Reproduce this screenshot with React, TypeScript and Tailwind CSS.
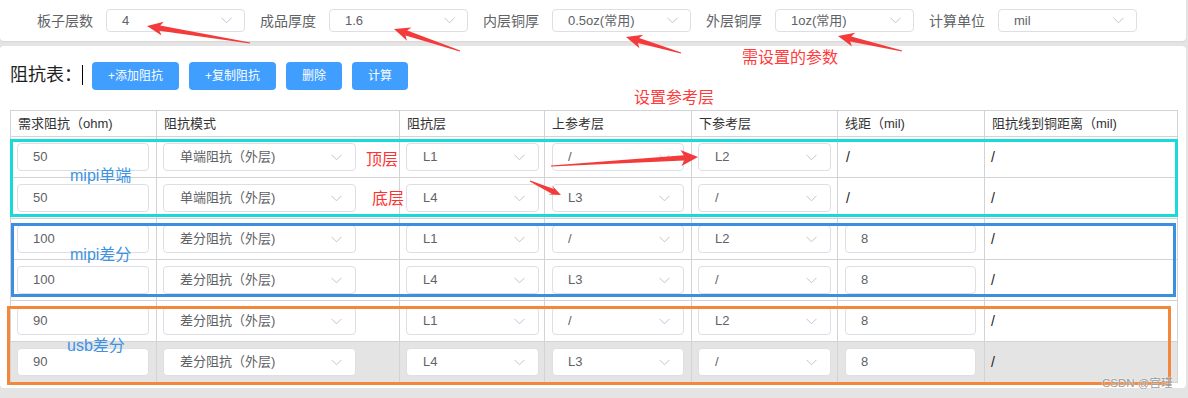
import React from 'react';

type Row = {
  imp: string;
  mode: string;
  layer: string;
  up: string;
  down: string;
  gap: string | null;
  gray?: boolean;
};

const params = [
  { label: '板子层数', value: '4' },
  { label: '成品厚度', value: '1.6' },
  { label: '内层铜厚', value: '0.5oz(常用)' },
  { label: '外层铜厚', value: '1oz(常用)' },
  { label: '计算单位', value: 'mil' },
];

const rows: Row[] = [
  { imp: '50', mode: '单端阻抗（外层)', layer: 'L1', up: '/', down: 'L2', gap: null },
  { imp: '50', mode: '单端阻抗（外层)', layer: 'L4', up: 'L3', down: '/', gap: null },
  { imp: '100', mode: '差分阻抗（外层)', layer: 'L1', up: '/', down: 'L2', gap: '8' },
  { imp: '100', mode: '差分阻抗（外层)', layer: 'L4', up: 'L3', down: '/', gap: '8' },
  { imp: '90', mode: '差分阻抗（外层)', layer: 'L1', up: '/', down: 'L2', gap: '8' },
  { imp: '90', mode: '差分阻抗（外层)', layer: 'L4', up: 'L3', down: '/', gap: '8', gray: true },
];

const headers = ['需求阻抗（ohm)', '阻抗模式', '阻抗层', '上参考层', '下参考层', '线距（mil)', '阻抗线到铜距离（mil)'];

const Chevron = () => (
  <svg width="11" height="7" viewBox="0 0 11 7" fill="none" className="shrink-0">
    <polyline points="0.5,0.8 5.5,5.8 10.5,0.8" stroke="#c0c4cc" strokeWidth="1" />
  </svg>
);

const Field = ({ text, className, select }: { text: string; className: string; select?: boolean }) => (
  <div className={`h-[28px] border border-[#dcdfe6] rounded-[4px] bg-white flex items-center justify-between pl-[15px] pr-[13px] text-[13px] text-[#606266] ${className}`}>
    <span>{text}</span>
    {select && <Chevron />}
  </div>
);

// red screenshot-tool arrow: thin tail, thicker neck, barbed head
function arrowPoints(x1: number, y1: number, x2: number, y2: number, head = 16, hw = 7) {
  const dx = x2 - x1;
  const dy = y2 - y1;
  const L = Math.hypot(dx, dy);
  const ux = dx / L;
  const uy = dy / L;
  const nx = -uy;
  const ny = ux;
  const bx = x2 - ux * head;
  const by = y2 - uy * head;
  const kx = bx + ux * 3;
  const ky = by + uy * 3;
  const p = (x: number, y: number) => `${x.toFixed(1)},${y.toFixed(1)}`;
  return [
    p(x1 + nx * 0.6, y1 + ny * 0.6),
    p(kx + nx * 2.6, ky + ny * 2.6),
    p(bx + nx * hw, by + ny * hw),
    p(x2, y2),
    p(bx - nx * hw, by - ny * hw),
    p(kx - nx * 2.6, ky - ny * 2.6),
    p(x1 - nx * 0.6, y1 - ny * 0.6),
  ].join(' ');
}

const arrows: [number, number, number, number, number?, number?][] = [
  [250, 43, 147, 26],
  [460, 51, 394, 29],
  [681, 53, 626, 37],
  [902, 51, 838, 36],
  [551, 166, 698, 157, 17, 8],
  [530, 181, 561, 195, 12, 5],
];

export default function App() {
  return (
    <div className="relative w-[1188px] h-[398px] overflow-hidden bg-[#e4e4e4] font-['Liberation_Sans','Noto_Sans_CJK_SC',sans-serif]">
      {/* parameter bar */}
      <div className="w-[1186px] h-[41px] bg-white rounded-b-[4px] shadow-[0_1px_2px_rgba(0,0,0,0.06)] flex items-center pl-[37px] gap-[15px]">
        {params.map(p => (
          <div key={p.label} className="flex items-center gap-[13px]">
            <span className="w-[56px] text-[14px] leading-[20px] text-[#606266]">{p.label}</span>
            <div className="w-[139px] h-[23px] border border-[#dcdfe6] rounded-[4px] flex items-center justify-between pl-[15px] pr-[12px] text-[13px] text-[#606266]">
              <span>{p.value}</span>
              <Chevron />
            </div>
          </div>
        ))}
      </div>

      {/* impedance table card */}
      <div className="mt-[5px] w-[1186px] h-[342px] bg-white rounded-[4px] px-[10px] pt-[16px]">
        <div className="flex items-center h-[28px]">
          <span className="text-[18px] leading-[22px] text-[#1f1f1f] -mt-[3px]">阻抗表：</span>
          <span className="w-px h-[20px] bg-black -mt-[3px]" />
          <div className="flex gap-[10px] ml-[9px] text-[12px] text-white">
            <button className="w-[87px] h-[28px] rounded-[4px] bg-[#409eff]">+添加阻抗</button>
            <button className="w-[87px] h-[28px] rounded-[4px] bg-[#409eff]">+复制阻抗</button>
            <button className="w-[56px] h-[28px] rounded-[4px] bg-[#409eff]">删除</button>
            <button className="w-[56px] h-[28px] rounded-[4px] bg-[#409eff]">计算</button>
          </div>
        </div>

        <div className="mt-[20px] w-[1168px] border-l border-t border-[#d3d3d3] grid grid-cols-[146px_243px_145px_147px_146px_147px_193px]">
          {headers.map(h => (
            <div key={h} className="h-[26px] border-r border-b border-[#d3d3d3] px-[7px] flex items-center text-[13px] text-[#333]">
              {h}
            </div>
          ))}
          {rows.map((r, i) => {
            const cell = `h-[41px] border-r border-b border-[#d3d3d3] flex items-center ${r.gray ? 'bg-[#e4e4e4]' : 'bg-white'}`;
            return (
              <React.Fragment key={i}>
                <div className={`${cell} pl-[6px]`}><Field text={r.imp} className="w-[132px]" /></div>
                <div className={`${cell} pl-[6px]`}><Field text={r.mode} className="w-[193px] pl-[16px]" select /></div>
                <div className={`${cell} pl-[6px]`}><Field text={r.layer} className="w-[133px] pl-[16px]" select /></div>
                <div className={`${cell} pl-[7px]`}><Field text={r.up} className="w-[132px]" select /></div>
                <div className={`${cell} pl-[6px]`}><Field text={r.down} className="w-[133px] pl-[16px]" select /></div>
                <div className={`${cell} pl-[7px]`}>
                  {r.gap ? <Field text={r.gap} className="w-[131px]" /> : <span className="text-[14px] text-[#222] pl-[1px]">/</span>}
                </div>
                <div className={`${cell} pl-[6px]`}><span className="text-[14px] text-[#222]">/</span></div>
              </React.Fragment>
            );
          })}
        </div>
      </div>

      {/* annotations drawn over the screenshot */}
      <div className="absolute left-[10px] top-[139px] w-[1168px] h-[78px] border-[3px] border-[#1ad9d9]" />
      <div className="absolute left-[11px] top-[223px] w-[1165px] h-[74px] border-[3px] border-[#3a8fe0]" />
      <div className="absolute left-[7px] top-[306px] w-[1164px] h-[79px] border-[3px] border-[#f3883a]" />

      <span className="absolute left-[70px] top-[166px] text-[16px] leading-[20px] text-[#3d93e3]">mipi单端</span>
      <span className="absolute left-[70px] top-[245px] text-[16px] leading-[20px] text-[#3d93e3]">mipi差分</span>
      <span className="absolute left-[67px] top-[336px] text-[16px] leading-[20px] text-[#3d93e3]">usb差分</span>

      <span className="absolute left-[366px] top-[150px] text-[16px] leading-[20px] text-[#ff3030]">顶层</span>
      <span className="absolute left-[372px] top-[189px] text-[16px] leading-[20px] text-[#ff3030]">底层</span>
      <span className="absolute left-[634px] top-[88px] text-[16px] leading-[20px] text-[#ff3b3b]">设置参考层</span>
      <span className="absolute left-[742px] top-[48px] text-[16px] leading-[20px] text-[#ff3b3b]">需设置的参数</span>

      <svg className="absolute left-0 top-0 pointer-events-none" width="1188" height="398">
        {arrows.map(([x1, y1, x2, y2, h, w], i) => (
          <polygon key={i} points={arrowPoints(x1, y1, x2, y2, h, w)} fill="#f43b3b" />
        ))}
      </svg>

      <span className="absolute left-[1102px] top-[376px] text-[11.5px] leading-[14px] text-[#9a9a9a] [text-shadow:0_0_2px_#fff]">CSDN @宫瑾</span>
    </div>
  );
}
